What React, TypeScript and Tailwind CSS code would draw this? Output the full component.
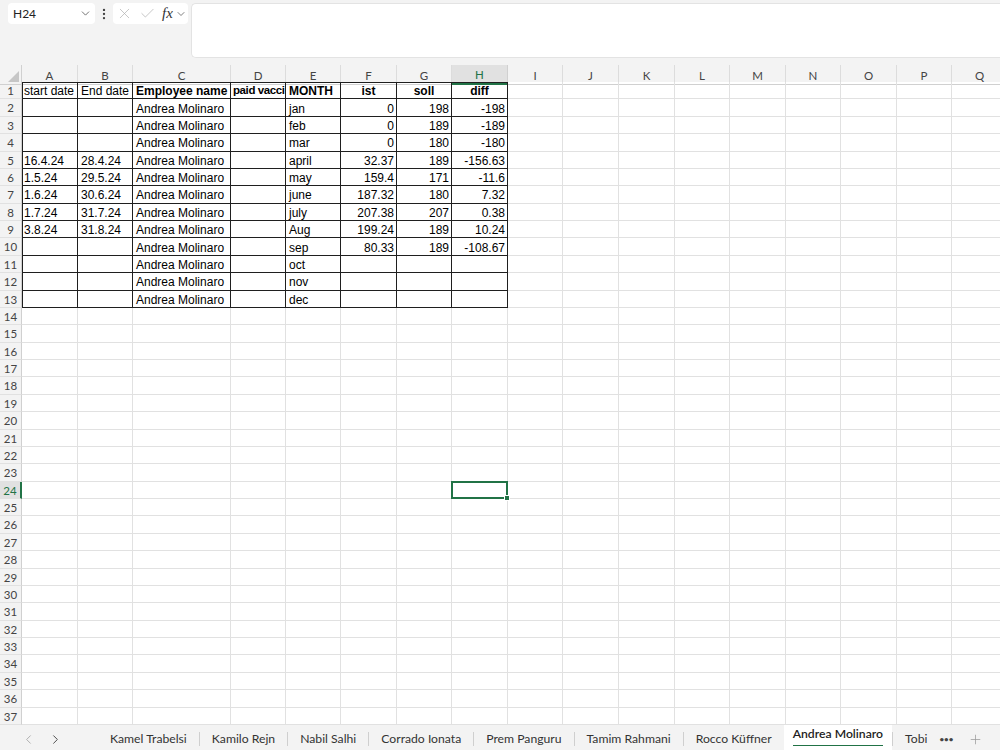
import { ChevronDown, ChevronLeft, ChevronRight, EllipsisVertical, X, Check, Plus } from "lucide-react";

const cols = [
  { l: "A", w: 56 },
  { l: "B", w: 55 },
  { l: "C", w: 98 },
  { l: "D", w: 55 },
  { l: "E", w: 55 },
  { l: "F", w: 56 },
  { l: "G", w: 55 },
  { l: "H", w: 56 },
  { l: "I", w: 55 },
  { l: "J", w: 56 },
  { l: "K", w: 56 },
  { l: "L", w: 55 },
  { l: "M", w: 56 },
  { l: "N", w: 55 },
  { l: "O", w: 56 },
  { l: "P", w: 55 },
  { l: "Q", w: 56 },
];

const gridCols =
  "grid grid-cols-[22px_56px_55px_98px_55px_55px_56px_55px_56px_55px_56px_56px_55px_56px_55px_56px_55px_56px]";

const months = ["jan", "feb", "mar", "april", "may", "june", "july", "Aug", "sep", "oct", "nov", "dec"];
const starts = ["", "", "", "16.4.24", "1.5.24", "1.6.24", "1.7.24", "3.8.24", "", "", "", ""];
const ends = ["", "", "", "28.4.24", "29.5.24", "30.6.24", "31.7.24", "31.8.24", "", "", "", ""];
const ist = ["0", "0", "0", "32.37", "159.4", "187.32", "207.38", "199.24", "80.33", "", "", ""];
const soll = ["198", "189", "180", "189", "171", "180", "207", "189", "189", "", "", ""];
const diff = ["-198", "-189", "-180", "-156.63", "-11.6", "7.32", "0.38", "10.24", "-108.67", "", "", ""];

const header = ["start date", "End date", "Employee name", "paid vacci", "MONTH", "ist", "soll", "diff"];

function cellValue(r: number, c: number): string {
  if (r === 1) return header[c] ?? "";
  const i = r - 2;
  if (i < 0 || i > 11 || c > 7) return "";
  return [starts[i], ends[i], "Andrea Molinaro", "", months[i], ist[i], soll[i], diff[i]][c];
}

const tabs = [
  "Kamel Trabelsi",
  "Kamilo Rejn",
  "Nabil Salhi",
  "Corrado Ionata",
  "Prem Panguru",
  "Tamim Rahmani",
  "Rocco Küffner",
];

function Cell({ r, c }: { r: number; c: number }) {
  const inTable = r <= 13 && c <= 7;
  const value = cellValue(r, c);
  const bold = r === 1 && c >= 2;
  const centered = r === 1 && c >= 5;
  const right = r > 1 && c >= 5;
  let shadow = "";
  if (inTable && c === 0 && r === 1) shadow = "shadow-[inset_1px_1px_0_#1f1f1f]";
  else if (inTable && c === 0) shadow = "shadow-[inset_1px_0_0_#1f1f1f]";
  else if (inTable && r === 1) shadow = "shadow-[inset_0_1px_0_#1f1f1f]";
  const selected = r === 24 && c === 7;

  return (
    <div
      className={`relative flex items-center overflow-hidden whitespace-nowrap border-r border-b pt-[2px] leading-none text-black font-['Liberation_Sans',Arial,sans-serif] ${
        c === 3 && r === 1 ? "text-[11.5px] tracking-[-0.4px]" : "text-[12px]"
      } ${inTable ? "border-[#1f1f1f]" : "border-[#e1e1e1]"} ${shadow} ${bold ? "font-bold" : ""} ${
        centered ? "justify-center" : right ? "justify-end pr-[2px]" : c === 0 ? "pl-[2px]" : c === 3 ? "pl-[2px]" : "pl-[3px]"
      } ${selected ? "overflow-visible z-10" : ""}`}
    >
      {value}
      {selected && (
        <div className="absolute -left-[1px] -top-[1px] -right-[1px] -bottom-[1px] border-2 border-[#217346]">
          <div className="absolute -right-[4px] -bottom-[4px] h-[6px] w-[6px] border border-white bg-[#217346]" />
        </div>
      )}
    </div>
  );
}

export default function App() {
  const rows = Array.from({ length: 37 }, (_, i) => i + 1);

  return (
    <div className="flex h-[750px] w-[1000px] flex-col overflow-hidden bg-white font-['Lato','Noto_Sans',sans-serif]">
      {/* Formula bar */}
      <div className="flex h-[65px] shrink-0 items-start bg-[#f3f3f3] pl-[8px] pt-[3px]">
        <div className="flex h-[21px] w-[87px] items-center justify-between rounded-[4px] bg-white pl-[5px] pr-[3px] text-[12px] text-[#222]">
          <span>H24</span>
          <ChevronDown size={13} strokeWidth={1.5} className="text-[#555]" />
        </div>
        <div className="flex h-[21px] w-[18px] items-center justify-center text-[#444]">
          <EllipsisVertical size={14} strokeWidth={2} />
        </div>
        <div className="flex h-[21px] w-[75px] items-center rounded-[4px] bg-white pl-[3px]">
          <X size={17} strokeWidth={1} className="text-[#b0b0b0]" />
          <Check size={17} strokeWidth={1} className="ml-[6px] text-[#b0b0b0]" />
          <span className="ml-[6px] font-['Liberation_Serif',serif] text-[15px] italic text-[#333]">fx</span>
          <ChevronDown size={12} strokeWidth={1.5} className="ml-[2px] text-[#555]" />
        </div>
        <div className="ml-[3px] h-[55px] flex-1 rounded-l-[5px] border border-r-0 border-[#e3e3e3] bg-white" />
      </div>

      {/* Column headers */}
      <div className={`${gridCols} h-[17px] shrink-0 bg-[#f3f3f3]`}>
        <div className="relative border-r border-b border-[#d0d0d0]">
          <svg className="absolute bottom-[2px] right-[2px]" width="11" height="11" viewBox="0 0 11 11">
            <polygon points="11,0 11,11 0,11" fill="#c6c6c6" />
          </svg>
        </div>
        {cols.map((col) =>
          col.l === "H" ? (
            <div
              key={col.l}
              className="flex items-center justify-center border-r border-b-2 border-r-[#d0d0d0] border-b-[#217346] bg-[#e1e1e1] pt-[1px] text-[11.5px] text-[#217346]"
            >
              {col.l}
            </div>
          ) : (
            <div
              key={col.l}
              className="flex items-center justify-center border-r border-b border-r-[#dcdcdc] border-b-[#d0d0d0] pt-[1px] text-[11.5px] text-[#444]"
            >
              {col.l}
            </div>
          )
        )}
      </div>

      {/* Grid */}
      <div className="flex-1 overflow-hidden">
        <div className={`${gridCols} auto-rows-[17.38px]`}>
          {rows.map((r) => (
            <div key={r} className="contents">
              {r === 24 ? (
                <div className="flex items-center justify-center border-b border-r-2 border-b-[#e1e1e1] border-r-[#217346] bg-[#e1e1e1] pt-[1px] text-[11.5px] text-[#217346]">
                  {r}
                </div>
              ) : (
                <div className="flex items-center justify-center border-r border-b border-r-[#d0d0d0] border-b-[#e1e1e1] bg-[#f3f3f3] pt-[1px] text-[11.5px] text-[#444]">
                  {r}
                </div>
              )}
              {cols.map((_, c) => (
                <Cell key={c} r={r} c={c} />
              ))}
            </div>
          ))}
        </div>
      </div>

      {/* Sheet tabs */}
      <div className="flex h-[25px] shrink-0 items-center bg-[#f3f3f3] text-[12.2px] text-[#333]">
        <div className="flex w-[98px] items-center pl-[21px] pt-[3px]">
          <ChevronLeft size={15} strokeWidth={1.5} className="text-[#aaa]" />
          <ChevronRight size={15} strokeWidth={1.5} className="ml-[12px] text-[#444]" />
        </div>
        {tabs.map((t, i) => (
          <div key={t} className="flex h-full items-center pt-[3px]">
            {i > 0 && <div className="h-[14px] w-px bg-[#cfcfcf]" />}
            <div className="px-[12px]">{t}</div>
          </div>
        ))}
        <div className="flex h-full flex-col items-center justify-end bg-white px-[9px]">
          <span className="font-semibold text-[#222]">Andrea Molinaro</span>
          <div className="mb-[4px] mt-[2px] h-[2px] w-full bg-[#217346]" />
        </div>
        <div className="mt-[3px] h-[14px] w-px bg-[#cfcfcf]" />
        <div className="pl-[12px] pt-[3px]">Tobi</div>
        <span className="ml-[12px] pt-[3px] text-[8px] font-bold text-[#444]">•••</span>
        <Plus size={15} strokeWidth={1.2} className="ml-[15px] mt-[3px] text-[#999]" />
      </div>
    </div>
  );
}
